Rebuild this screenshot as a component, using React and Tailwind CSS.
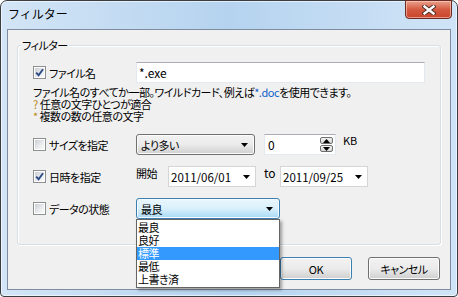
import React from 'react';

const ui = "font-['Noto_Sans_CJK_JP',sans-serif] [font-feature-settings:'palt']";
const jp = 'text-[11px] tracking-[-0.5px]';

const Arrow = () => (
  <svg width="7" height="4" viewBox="0 0 7 4" className="shrink-0">
    <path d="M0 0h7L3.5 4z" fill="#000" />
  </svg>
);

const Check = ({ checked }) => (
  <span className="w-[13px] h-[13px] border border-[#8e8f8f] bg-white p-[1px] flex shrink-0">
    <span className="flex-1 flex items-center justify-center bg-linear-to-br from-[#c9cdd3] via-[#e6e8eb] to-[#fafafa]">
      {checked && (
        <svg width="9" height="9" viewBox="0 0 9 9">
          <path d="M1.2 4.6 L3.6 7.2 L8 1.2" fill="none" stroke="#2d4a86" strokeWidth="1.9" />
        </svg>
      )}
    </span>
  </span>
);

const CheckLabel = ({ checked, children }) => (
  <div className="w-[103px] flex items-center gap-[3px] shrink-0">
    <Check checked={checked} />
    <span className={`${jp} leading-[16px] text-black`}>{children}</span>
  </div>
);

const DateBox = ({ value }) => (
  <div className="w-[88px] h-[21px] bg-white border border-[#d5d5d5] flex items-center justify-between pl-[2px] pr-[5px]">
    <span className="text-[11.5px] leading-[16px] text-black">{value}</span>
    <Arrow />
  </div>
);

const Button = ({ focused, children }) => (
  <div
    className={`w-[72px] h-[23px] rounded-[3px] border flex items-center justify-center ${jp} leading-[16px] text-black bg-linear-to-b from-[#f2f2f2] from-0% via-[#ebebeb] via-50% to-[#cfcfcf] to-100% shadow-[inset_0_0_0_1px_#fcfcfc] ${
      focused ? 'border-[#3c7fb1]' : 'border-[#707070]'
    }`}
  >
    {children}
  </div>
);

export default function App() {
  const items = ['最良', '良好', '標準', '最低', '上書き済'];
  return (
    <div className={`w-[458px] h-[297px] bg-white ${ui}`}>
      <div className="w-[458px] h-[297px] flex flex-col rounded-t-[7px] rounded-b-[4px] border border-[#3a3d42] bg-linear-to-r from-[#d3e5f6] via-[#b5d3ef] to-[#d0e4f7] shadow-[inset_0_0_0_1px_rgba(255,255,255,0.6)]">
        {/* タイトルバー */}
        <div className="h-[28px] flex items-start justify-between pl-[7px] pr-[5px] shrink-0">
          <span className="mt-[5px] text-[12px] leading-[16px] text-black [font-feature-settings:normal]">フィルター</span>
          <div className="w-[47px] h-[19px] -mt-[1px] rounded-b-[4px] border border-[#6b2a22] bg-linear-to-b from-[#eaa08c] via-[#d45a40] to-[#c9452b] shadow-[inset_0_0_0_1px_rgba(255,220,210,0.55)] flex items-center justify-center">
            <svg width="14" height="10" viewBox="0 0 14 10">
              <path d="M2.5 1.5 L11.5 8.5 M11.5 1.5 L2.5 8.5" stroke="#4a2a25" strokeWidth="4.2" strokeLinecap="square" />
              <path d="M2.5 1.5 L11.5 8.5 M11.5 1.5 L2.5 8.5" stroke="#fff" strokeWidth="2.4" strokeLinecap="square" />
            </svg>
          </div>
        </div>

        {/* クライアント領域 */}
        <div className="mx-[6px] h-[261px] border border-[#7d8d9f] bg-[#f0f0f0] flex flex-col px-[9px] pt-[15px] shrink-0">
          <div className="relative h-[200px] border border-[#d5dfe5] rounded-[3px] shadow-[inset_1px_1px_0_#fff,1px_1px_0_#fff] pl-[15px] pt-[16px] flex flex-col">
            <span className={`absolute -top-[9px] left-[3px] px-[1px] bg-[#f0f0f0] ${jp} leading-[16px] text-black`}>フィルター</span>

            {/* ファイル名 */}
            <div className="flex items-center h-[21px]">
              <CheckLabel checked>ファイル名</CheckLabel>
              <div className="w-[289px] h-[21px] bg-white border border-[#e3e9ef] border-t-[#abadb3] flex items-center pl-[2px] text-[12px] leading-[16px] text-black">
                *.exe
              </div>
            </div>

            <div className={`mt-[3px] ${jp} leading-[12px] text-black`}>
              <div>
                ファイル名のすべてか一部。ワイルドカード、例えば<span className="text-[#0f5fc8]">*.doc</span>を使用できます。
              </div>
              <div>
                <span className="text-[#b8860b]">?</span> 任意の文字ひとつが適合
              </div>
              <div>
                <span className="text-[#b8860b]">*</span> 複数の数の任意の文字
              </div>
            </div>

            {/* サイズ */}
            <div className="mt-[12px] flex items-center h-[21px]">
              <CheckLabel>サイズを指定</CheckLabel>
              <div className="w-[119px] h-[21px] rounded-[3px] border border-[#707070] bg-linear-to-b from-[#f2f2f2] via-[#ebebeb] to-[#cfcfcf] shadow-[inset_0_0_0_1px_#fcfcfc] flex items-center justify-between pl-[4px] pr-[6px]">
                <span className={`${jp} leading-[16px] text-black`}>より多い</span>
                <Arrow />
              </div>
              <div className="ml-[9px] w-[72px] h-[21px] bg-white border border-[#e3e9ef] border-t-[#abadb3] flex items-center justify-between pl-[3px] pr-[2px]">
                <span className="text-[12px] leading-[16px] text-black">0</span>
                <div className="flex flex-col gap-[1px]">
                  <div className="w-[13px] h-[7px] rounded-[2px] border border-[#6f6f6f] bg-linear-to-b from-[#f4f4f4] to-[#d4d4d4] flex items-center justify-center">
                    <svg width="7" height="4" viewBox="0 0 7 4"><path d="M0 4h7L3.5 0z" fill="#000" /></svg>
                  </div>
                  <div className="w-[13px] h-[7px] rounded-[2px] border border-[#6f6f6f] bg-linear-to-b from-[#f4f4f4] to-[#d4d4d4] flex items-center justify-center">
                    <svg width="7" height="4" viewBox="0 0 7 4"><path d="M0 0h7L3.5 4z" fill="#000" /></svg>
                  </div>
                </div>
              </div>
              <span className="ml-[7px] mb-[9px] text-[11px] leading-[14px] text-black">KB</span>
            </div>

            {/* 日時 */}
            <div className="mt-[11px] flex items-center h-[21px]">
              <CheckLabel checked>日時を指定</CheckLabel>
              <span className={`w-[32px] mb-[8px] ${jp} leading-[16px] text-black`}>開始</span>
              <DateBox value="2011/06/01" />
              <span className="w-[24px] pl-[8px] mb-[7px] text-[12px] leading-[16px] text-black">to</span>
              <DateBox value="2011/09/25" />
            </div>

            {/* データの状態 */}
            <div className="mt-[11px] flex items-center h-[21px]">
              <CheckLabel>データの状態</CheckLabel>
              <div className="relative z-10">
                <div className="w-[144px] h-[21px] rounded-[3px] border border-[#3c7fb1] bg-linear-to-b from-[#eaf6fd] via-[#d9f0fc] to-[#a7d9f5] shadow-[inset_0_0_0_1px_#f4fbff] flex items-center justify-between pl-[4px] pr-[6px]">
                  <span className={`${jp} leading-[16px] text-black`}>最良</span>
                  <Arrow />
                </div>
                <div className="absolute top-full left-0 w-[144px] bg-white border border-[#646464] shadow-[2px_2px_3px_rgba(0,0,0,0.35)] py-[1px]">
                  {items.map((it) => (
                    <div
                      key={it}
                      className={`h-[13px] pl-[1px] ${jp} leading-[13px] ${
                        it === '標準' ? 'bg-[#3399ff] text-white' : 'text-black'
                      }`}
                    >
                      {it}
                    </div>
                  ))}
                </div>
              </div>
            </div>
          </div>

          {/* ボタン */}
          <div className="mt-[12px] flex justify-end gap-[16px] pr-[1px]">
            <Button focused>OK</Button>
            <Button>キャンセル</Button>
          </div>
        </div>
      </div>
    </div>
  );
}
